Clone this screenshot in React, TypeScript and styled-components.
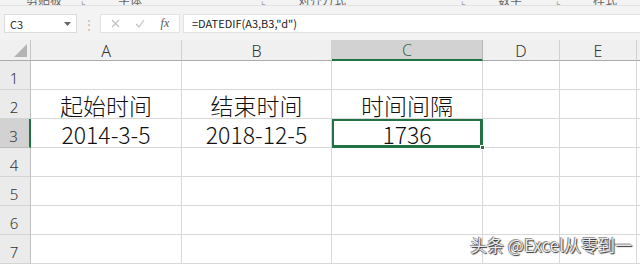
import React from 'react';
import styled, { createGlobalStyle } from 'styled-components';

const GlobalStyle = createGlobalStyle`
  html, body {
    margin: 0;
    padding: 0;
    background: #ffffff;
    overflow: hidden;
  }
  body {
    font-family: "Noto Sans CJK SC", "Liberation Sans", sans-serif;
  }
`;

const GREEN = '#217346';
const GRID = '#d8d8d8';

const columns = [
  { key: 'A', width: 151 },
  { key: 'B', width: 150 },
  { key: 'C', width: 151 },
  { key: 'D', width: 77 },
  { key: 'E', width: 77 },
  { key: 'F', width: 40 },
];

const data: Record<string, string> = {
  A2: '起始时间',
  B2: '结束时间',
  C2: '时间间隔',
  A3: '2014-3-5',
  B3: '2018-12-5',
  C3: '1736',
};

const rows = [1, 2, 3, 4, 5, 6, 7];

const Screen = styled.div`
  width: 640px;
  height: 265px;
  overflow: hidden;
  position: relative;
  background: #fff;
`;

// bottom edge of the ribbon, group captions are scrolled mostly out of view
const RibbonEdge = styled.div`
  height: 5px;
  background: #f3f3f3;
  border-bottom: 1px solid #e2e2e2;
  display: flex;
  align-items: flex-end;
  overflow: hidden;
  font-size: 12px;
  color: #666;
`;

const GroupLabel = styled.span<{ $w: number }>`
  width: ${(p) => p.$w}px;
  flex: none;
  display: flex;
  justify-content: space-between;
  align-items: flex-end;
  line-height: 12px;
  margin-bottom: -1px;
  padding: 0 6px 0 26px;
  box-sizing: border-box;
  & i {
    font-style: normal;
    font-size: 10px;
    color: #999;
  }
`;

const FormulaBar = styled.div`
  height: 34px;
  background: #f3f3f3;
  display: flex;
  align-items: flex-start;
  padding: 8px 0 0 4px;
  box-sizing: border-box;
`;

const NameBox = styled.div`
  width: 73px;
  height: 19px;
  background: #fff;
  border: 1px solid #dcdcdc;
  box-sizing: border-box;
  display: flex;
  align-items: center;
  justify-content: space-between;
  padding: 0 5px;
  font-size: 11px;
  color: #333;
`;

const Grip = styled.div`
  width: 23px;
  display: flex;
  justify-content: center;
  color: #b8b8b8;
  font-size: 12px;
  line-height: 19px;
`;

const FnButtons = styled.div`
  width: 80px;
  height: 19px;
  background: #fff;
  border: 1px solid #e2e2e2;
  box-sizing: border-box;
  display: flex;
  align-items: center;
  justify-content: space-around;
  padding: 0 2px;
`;

const Fx = styled.span`
  font-family: "Liberation Serif", serif;
  font-style: italic;
  color: #555;
  font-size: 12px;
`;

const FormulaInput = styled.div`
  flex: 1;
  height: 19px;
  margin-left: 3px;
  background: #fff;
  border: 1px solid #e2e2e2;
  border-right: none;
  box-sizing: border-box;
  padding-left: 8px;
  font-size: 11px;
  line-height: 17px;
  color: #222;
`;

const Sheet = styled.div`
  display: grid;
  grid-template-columns: 31px ${columns.map((c) => `${c.width}px`).join(' ')};
  grid-template-rows: 21px repeat(${rows.length}, 29px);
  background: #fff;
`;

const Corner = styled.div`
  background: #f0f0f0;
  border-right: 1px solid #c6c6c6;
  border-bottom: 1px solid #ababab;
  box-sizing: border-box;
  display: flex;
  align-items: flex-end;
  justify-content: flex-end;
  padding: 0 3px 3px 0;
`;

const Triangle = styled.div`
  width: 0;
  height: 0;
  border-left: 13px solid transparent;
  border-bottom: 13px solid #b4b4b4;
`;

const ColHeader = styled.div<{ $active?: boolean }>`
  background: ${(p) => (p.$active ? '#d2d2d2' : '#f0f0f0')};
  border-right: 1px solid ${(p) => (p.$active ? '#b8b8b8' : '#d0d0d0')};
  border-bottom: ${(p) => (p.$active ? `2px solid ${GREEN}` : '1px solid #ababab')};
  box-sizing: border-box;
  display: flex;
  align-items: center;
  justify-content: center;
  font-family: "Noto Sans", "Liberation Sans", sans-serif;
  font-weight: 300;
  font-size: 16px;
  color: ${(p) => (p.$active ? '#3d6b52' : '#333')};
  padding-top: 1px;
`;

const RowHeader = styled.div<{ $active?: boolean }>`
  background: ${(p) => (p.$active ? '#d2d2d2' : '#ebebeb')};
  border-right: ${(p) => (p.$active ? `2px solid ${GREEN}` : '1px solid #c0c0c0')};
  border-bottom: 1px solid ${(p) => (p.$active ? '#bdbdbd' : '#d4d4d4')};
  box-sizing: border-box;
  display: flex;
  align-items: flex-end;
  justify-content: center;
  font-family: "Noto Sans", "Liberation Sans", sans-serif;
  font-weight: 300;
  font-size: 15px;
  line-height: 21px;
  color: #333;
  padding-right: 2px;
`;

const Cell = styled.div<{ $selected?: boolean }>`
  position: relative;
  border-right: 1px solid ${GRID};
  border-bottom: 1px solid ${GRID};
  box-sizing: border-box;
  display: flex;
  align-items: flex-end;
  justify-content: center;
  font-family: "Noto Sans CJK SC", "Noto Sans", sans-serif;
  font-weight: 300;
  font-size: 23px;
  line-height: 26px;
  color: #111;
  white-space: nowrap;
  ${(p) =>
    p.$selected &&
    `
    box-shadow: inset 0 0 0 2px ${GREEN};
    border-color: ${GREEN};
  `}
`;

const Handle = styled.span`
  position: absolute;
  right: -3px;
  bottom: -3px;
  width: 5px;
  height: 5px;
  background: ${GREEN};
  border: 1px solid #fff;
  box-sizing: border-box;
  z-index: 2;
`;

const Watermark = styled.div`
  position: absolute;
  right: 8px;
  bottom: 8px;
  font-family: "Noto Sans CJK SC", "Liberation Sans", sans-serif;
  font-size: 17px;
  color: rgba(255, 255, 255, 0.92);
  text-shadow: 0 0 1px #222, 1px 1px 1px #333, -1px -1px 0 rgba(0, 0, 0, 0.35);
`;

const ribbonGroups = [
  { label: '剪贴板', w: 92 },
  { label: '字体', w: 180 },
  { label: '对齐方式', w: 200 },
  { label: '数字', w: 95 },
  { label: '样式', w: 120 },
];

export default function App() {
  return (
    <>
      <GlobalStyle />
      <Screen>
        <RibbonEdge>
          {ribbonGroups.map((g) => (
            <GroupLabel key={g.label} $w={g.w}>
              <span>{g.label}</span>
              <i>⌞</i>
            </GroupLabel>
          ))}
        </RibbonEdge>
        <FormulaBar>
          <NameBox>
            <span>C3</span>
            <svg width="7" height="4" viewBox="0 0 7 4">
              <path d="M0 0h7L3.5 4z" fill="#666" />
            </svg>
          </NameBox>
          <Grip>⋮</Grip>
          <FnButtons>
            <svg width="9" height="9" viewBox="0 0 9 9">
              <path d="M1 1l7 7M8 1L1 8" stroke="#bdbdbd" strokeWidth="1.1" />
            </svg>
            <svg width="10" height="9" viewBox="0 0 10 9">
              <path d="M1 5l3 3 5-7" stroke="#bdbdbd" strokeWidth="1.1" fill="none" />
            </svg>
            <Fx>fx</Fx>
          </FnButtons>
          <FormulaInput>=DATEDIF(A3,B3,"d")</FormulaInput>
        </FormulaBar>
        <Sheet>
          <Corner>
            <Triangle />
          </Corner>
          {columns.map((c) => (
            <ColHeader key={c.key} $active={c.key === 'C'}>
              {c.key === 'F' ? '' : c.key}
            </ColHeader>
          ))}
          {rows.map((r) => (
            <React.Fragment key={r}>
              <RowHeader $active={r === 3}>{r}</RowHeader>
              {columns.map((c) => {
                const id = `${c.key}${r}`;
                const selected = id === 'C3';
                return (
                  <Cell key={id} $selected={selected}>
                    {data[id] ?? ''}
                    {selected && <Handle />}
                  </Cell>
                );
              })}
            </React.Fragment>
          ))}
        </Sheet>
        <Watermark>头条 @Excel从零到一</Watermark>
      </Screen>
    </>
  );
}
